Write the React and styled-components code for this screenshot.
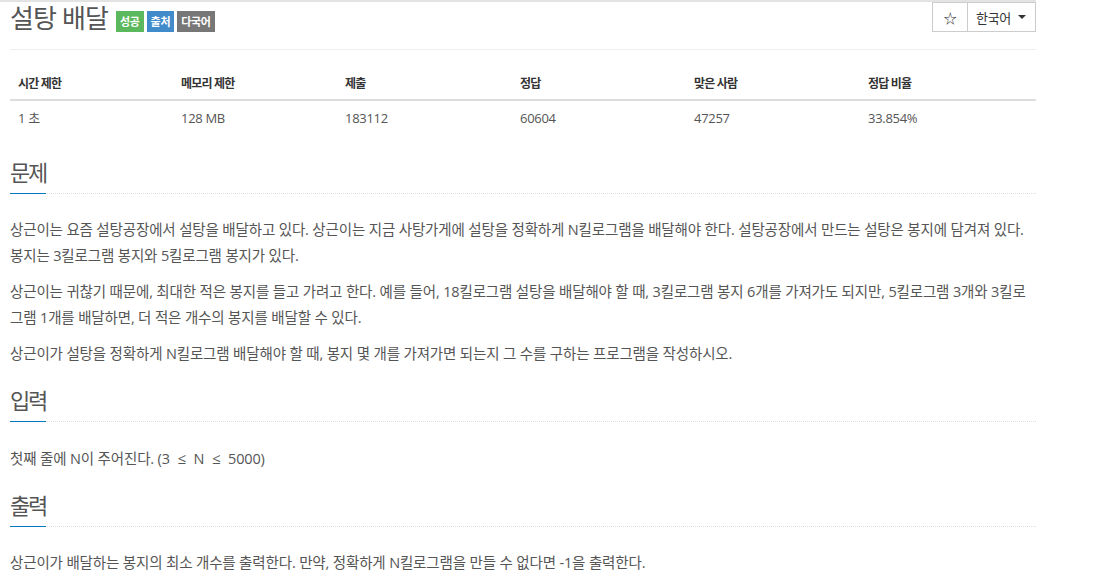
import React from 'react';
import styled, { createGlobalStyle } from 'styled-components';

const GlobalStyle = createGlobalStyle`
  body {
    margin: 0;
    background: #fff;
    font-family: "Open Sans", "Noto Sans CJK KR", sans-serif;
    color: #555;
  }
`;

const Page = styled.div`
  width: 1026px;
  padding-left: 10px;
  border-top: 2px solid #e3e3e3;
`;

const PageHeader = styled.div`
  display: flex;
  justify-content: space-between;
  align-items: flex-start;
  height: 47px;
  border-bottom: 1px solid #eee;
`;

const TitleGroup = styled.div`
  display: flex;
  align-items: flex-start;
`;

const Title = styled.h1`
  margin: 0 8px 0 0;
  font-size: 26px;
  line-height: 32px;
  font-weight: 400;
  letter-spacing: -0.9px;
  color: #555;
`;

const labelColors = {
  success: '#5cb85c',
  info: '#428bca',
  muted: '#777',
};

const Label = styled.span`
  display: inline-block;
  margin: 9px 3px 0 0;
  height: 21px;
  line-height: 21px;
  padding: 0 4px;
  font-size: 11px;
  font-weight: 700;
  letter-spacing: -0.3px;
  color: #fff;
  background: ${(p) => labelColors[p.$kind]};
`;

const ButtonGroup = styled.div`
  display: flex;
`;

const Button = styled.button`
  height: 30px;
  padding: 0 ${(p) => (p.$wide ? '8px' : '0')};
  width: ${(p) => (p.$wide ? '69px' : '36px')};
  margin-left: ${(p) => (p.$wide ? '-1px' : '0')};
  display: flex;
  align-items: center;
  justify-content: ${(p) => (p.$wide ? 'space-between' : 'center')};
  border: 1px solid #ccc;
  background: #fff;
  color: #333;
  font-family: "Open Sans", "Noto Sans CJK KR", sans-serif;
  font-size: 13px;
  letter-spacing: -0.3px;
`;

const Caret = styled.span`
  display: inline-block;
  width: 0;
  height: 0;
  margin-right: 1px;
  border-top: 4px solid #333;
  border-left: 4px solid transparent;
  border-right: 4px solid transparent;
`;

const Table = styled.table`
  width: 100%;
  margin-top: 14px;
  border-collapse: collapse;
  table-layout: fixed;
  font-size: 13px;
`;

const Th = styled.th`
  width: ${(p) => p.$w}px;
  padding: 10px 8px 6px;
  line-height: 19px;
  text-align: left;
  font-size: 12px;
  font-weight: 700;
  letter-spacing: -0.8px;
  color: #333;
  border-bottom: 2px solid #ddd;
`;

const Td = styled.td`
  padding: 8px;
  line-height: 19px;
  letter-spacing: -0.3px;
  color: #555;
`;

const Section = styled.section`
  margin-top: ${(p) => (p.$first ? '25px' : '22px')};
`;

const Headline = styled.div`
  border-bottom: 1px dotted #ddd;
`;

const HeadlineTitle = styled.h2`
  display: inline-block;
  margin: 0 0 -1px;
  padding-bottom: 10px;
  font-size: 22px;
  line-height: 22px;
  font-weight: 400;
  letter-spacing: -2.2px;
  color: #555;
  border-bottom: 1px solid #0076c0;
`;

const SectionBody = styled.div`
  margin-top: 23px;
  font-size: 14.5px;
  line-height: 26px;
  letter-spacing: -0.15px;
  color: #555;

  p {
    margin: 0 0 10px;
  }
`;

const Rel = styled.span`
  margin: 0 4px;
  font-size: 15px;
`;

const stats = [
  ['시간 제한', '1 초', 147],
  ['메모리 제한', '128 MB', 148],
  ['제출', '183112', 159],
  ['정답', '60604', 158],
  ['맞은 사람', '47257', 158],
  ['정답 비율', '33.854%', 160],
];

const App = () => (
  <>
    <GlobalStyle />
    <Page>
      <PageHeader>
        <TitleGroup>
          <Title>설탕 배달</Title>
          <Label $kind="success">성공</Label>
          <Label $kind="info">출처</Label>
          <Label $kind="muted">다국어</Label>
        </TitleGroup>
        <ButtonGroup>
          <Button>☆</Button>
          <Button $wide>
            한국어 <Caret />
          </Button>
        </ButtonGroup>
      </PageHeader>

      <Table>
        <thead>
          <tr>
            {stats.map(([head, , w]) => (
              <Th key={head} $w={w}>
                {head}
              </Th>
            ))}
          </tr>
        </thead>
        <tbody>
          <tr>
            {stats.map(([head, value]) => (
              <Td key={head}>{value}</Td>
            ))}
          </tr>
        </tbody>
      </Table>

      <Section $first>
        <Headline>
          <HeadlineTitle>문제</HeadlineTitle>
        </Headline>
        <SectionBody>
          <p>
            상근이는 요즘 설탕공장에서 설탕을 배달하고 있다. 상근이는 지금 사탕가게에 설탕을 정확하게 N킬로그램을
            배달해야 한다. 설탕공장에서 만드는 설탕은 봉지에 담겨져 있다. 봉지는 3킬로그램 봉지와 5킬로그램 봉지가
            있다.
          </p>
          <p>
            상근이는 귀찮기 때문에, 최대한 적은 봉지를 들고 가려고 한다. 예를 들어, 18킬로그램 설탕을 배달해야 할 때,
            3킬로그램 봉지 6개를 가져가도 되지만, 5킬로그램 3개와 3킬로그램 1개를 배달하면, 더 적은 개수의 봉지를
            배달할 수 있다.
          </p>
          <p>
            상근이가 설탕을 정확하게 N킬로그램 배달해야 할 때, 봉지 몇 개를 가져가면 되는지 그 수를 구하는 프로그램을
            작성하시오.
          </p>
        </SectionBody>
      </Section>

      <Section>
        <Headline>
          <HeadlineTitle>입력</HeadlineTitle>
        </Headline>
        <SectionBody>
          <p>
            첫째 줄에 N이 주어진다. (3 <Rel>≤</Rel> N <Rel>≤</Rel> 5000)
          </p>
        </SectionBody>
      </Section>

      <Section>
        <Headline>
          <HeadlineTitle>출력</HeadlineTitle>
        </Headline>
        <SectionBody>
          <p>상근이가 배달하는 봉지의 최소 개수를 출력한다. 만약, 정확하게 N킬로그램을 만들 수 없다면 -1을 출력한다.</p>
        </SectionBody>
      </Section>
    </Page>
  </>
);

export default App;
